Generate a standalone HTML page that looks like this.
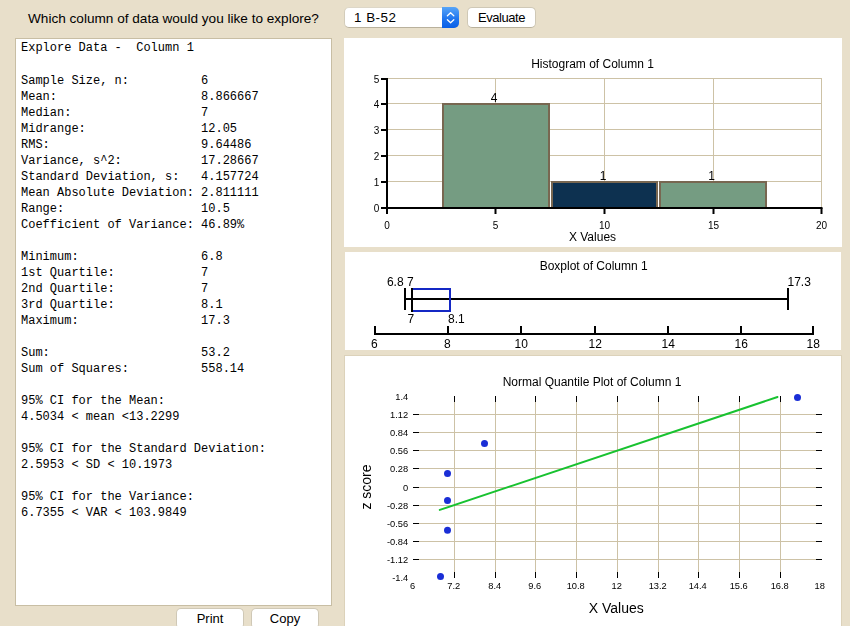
<!DOCTYPE html>
<html lang="en">
<head>
<meta charset="utf-8">
<title>Explore Data</title>
<style>
html,body{margin:0;padding:0;}
body{width:850px;height:626px;overflow:hidden;background:#e8dfca;position:relative;font-family:'Liberation Sans', Arial, Helvetica, sans-serif;color:#000;}
.abs{position:absolute;}
#q{left:28px;top:11px;font-size:13.6px;line-height:16px;white-space:nowrap;}
#sel{left:344px;top:7px;width:115px;height:21px;background:#fff;border-radius:5px;box-sizing:border-box;border:1px solid #d3ccba;border-top-color:#ddd7c8;border-bottom-color:#b9b19c;font-size:13.4px;line-height:19px;}
#sel span{position:absolute;left:9px;top:0;letter-spacing:0.5px;}
#sel i{position:absolute;right:-1px;top:-1px;width:17px;height:21px;background:linear-gradient(#57a5f8,#1b72ee 60%,#0a5fe6);display:block;border-radius:0 5px 5px 0;}
.btn{height:21px;background:#fff;border-radius:5px;box-sizing:border-box;border:1px solid #cfc8b6;border-bottom-color:#b9b19c;font-size:13px;line-height:19px;text-align:center;}
#panel{left:15px;top:38px;width:317px;height:568px;box-sizing:border-box;background:#fff;border:1px solid #c8bea4;}
#panel pre{margin:0;position:absolute;left:5px;font-family:'Liberation Mono', 'DejaVu Sans Mono', monospace;font-size:12px;line-height:16px;}
#p1{top:1px;}
#p2{top:34px;}
svg{position:absolute;left:0;top:0;}
#charts{will-change:transform;}
svg text{font-family:'Liberation Sans', Arial, Helvetica, sans-serif;fill:#000;}
</style>
</head>
<body>
<div id="q" class="abs">Which column of data would you like to explore?</div>
<div id="sel" class="abs"><span>1 B-52</span><i><svg width="17" height="21" viewBox="0 0 17 21"><path d="M5.4 8.7 L8.6 5.7 L11.8 8.7 M5.4 12.7 L8.6 15.7 L11.8 12.7" fill="none" stroke="#fff" stroke-width="1.3" stroke-linecap="round" stroke-linejoin="round"/></svg></i></div>
<div class="abs btn" style="left:467px;top:7px;width:69px;letter-spacing:-0.45px;">Evaluate</div>
<div id="panel" class="abs"><pre id="p1">Explore Data -  Column 1</pre><pre id="p2">Sample Size, n:          6
Mean:                    8.866667
Median:                  7
Midrange:                12.05
RMS:                     9.64486
Variance, s^2:           17.28667
Standard Deviation, s:   4.157724
Mean Absolute Deviation: 2.811111
Range:                   10.5
Coefficient of Variance: 46.89%

Minimum:                 6.8
1st Quartile:            7
2nd Quartile:            7
3rd Quartile:            8.1
Maximum:                 17.3

Sum:                     53.2
Sum of Squares:          558.14

95% CI for the Mean:
4.5034 &lt; mean &lt;13.2299

95% CI for the Standard Deviation:
2.5953 &lt; SD &lt; 10.1973

95% CI for the Variance:
6.7355 &lt; VAR &lt; 103.9849</pre></div>
<div class="abs btn" style="left:176px;top:608px;width:68px;">Print</div>
<div class="abs btn" style="left:251px;top:608px;width:68px;">Copy</div>
<svg id="charts" width="850" height="626" viewBox="0 0 850 626">
<rect x="344" y="38" width="498" height="209" fill="#fff"/>
<rect x="345" y="252" width="496" height="98" fill="#fff"/>
<rect x="344.5" y="355.5" width="497" height="280" fill="#fff" stroke="#dcd2ba" stroke-width="1"/>
<text x="592.5" y="68.2" font-size="12" text-anchor="middle">Histogram of Column 1</text>
<line x1="388" x2="822" y1="181.5" y2="181.5" stroke="#cdc2a6" stroke-width="1"/>
<line x1="388" x2="822" y1="155.5" y2="155.5" stroke="#cdc2a6" stroke-width="1"/>
<line x1="388" x2="822" y1="129.5" y2="129.5" stroke="#cdc2a6" stroke-width="1"/>
<line x1="388" x2="822" y1="103.5" y2="103.5" stroke="#cdc2a6" stroke-width="1"/>
<line x1="388" x2="822" y1="78.5" y2="78.5" stroke="#cdc2a6" stroke-width="1"/>
<line x1="495.5" x2="495.5" y1="78" y2="207" stroke="#cdc2a6" stroke-width="1"/>
<line x1="604.5" x2="604.5" y1="78" y2="207" stroke="#cdc2a6" stroke-width="1"/>
<line x1="713.5" x2="713.5" y1="78" y2="207" stroke="#cdc2a6" stroke-width="1"/>
<line x1="821.5" x2="821.5" y1="78" y2="207" stroke="#cdc2a6" stroke-width="1"/>
<rect x="443" y="104" width="106" height="104" fill="#759c82" stroke="#786751" stroke-width="2"/>
<text x="494" y="101.8" font-size="12" text-anchor="middle">4</text>
<rect x="552" y="182" width="105" height="26" fill="#0d3150" stroke="#786751" stroke-width="2"/>
<text x="603" y="179.8" font-size="12" text-anchor="middle">1</text>
<rect x="660" y="182" width="106" height="26" fill="#759c82" stroke="#786751" stroke-width="2"/>
<text x="711.5" y="179.8" font-size="12" text-anchor="middle">1</text>
<line x1="387" x2="387" y1="78" y2="214" stroke="#000" stroke-width="2"/>
<line x1="381" x2="822.5" y1="208" y2="208" stroke="#000" stroke-width="2"/>
<line x1="381" x2="387" y1="208.0" y2="208.0" stroke="#000" stroke-width="2"/>
<text x="379.3" y="211.9" font-size="10" text-anchor="end">0</text>
<line x1="381" x2="387" y1="182.0" y2="182.0" stroke="#000" stroke-width="2"/>
<text x="379.3" y="185.9" font-size="10" text-anchor="end">1</text>
<line x1="381" x2="387" y1="156.0" y2="156.0" stroke="#000" stroke-width="2"/>
<text x="379.3" y="159.9" font-size="10" text-anchor="end">2</text>
<line x1="381" x2="387" y1="130.0" y2="130.0" stroke="#000" stroke-width="2"/>
<text x="379.3" y="133.9" font-size="10" text-anchor="end">3</text>
<line x1="381" x2="387" y1="104.0" y2="104.0" stroke="#000" stroke-width="2"/>
<text x="379.3" y="107.9" font-size="10" text-anchor="end">4</text>
<line x1="381" x2="387" y1="79.0" y2="79.0" stroke="#000" stroke-width="2"/>
<text x="379.3" y="82.9" font-size="10" text-anchor="end">5</text>
<line x1="387" x2="387" y1="208" y2="214" stroke="#000" stroke-width="2"/>
<text x="387" y="229" font-size="10" text-anchor="middle">0</text>
<line x1="495.5" x2="495.5" y1="208" y2="214" stroke="#000" stroke-width="2"/>
<text x="495.5" y="229" font-size="10" text-anchor="middle">5</text>
<line x1="604.5" x2="604.5" y1="208" y2="214" stroke="#000" stroke-width="2"/>
<text x="604.5" y="229" font-size="10" text-anchor="middle">10</text>
<line x1="713.5" x2="713.5" y1="208" y2="214" stroke="#000" stroke-width="2"/>
<text x="713.5" y="229" font-size="10" text-anchor="middle">15</text>
<line x1="821.5" x2="821.5" y1="208" y2="214" stroke="#000" stroke-width="2"/>
<text x="821.5" y="229" font-size="10" text-anchor="middle">20</text>
<text x="592.5" y="240.6" font-size="12" text-anchor="middle">X Values</text>
<text x="593.7" y="270.3" font-size="12" text-anchor="middle">Boxplot of Column 1</text>
<line x1="405" x2="788" y1="299" y2="299" stroke="#000" stroke-width="2"/>
<line x1="405" x2="405" y1="288" y2="310" stroke="#000" stroke-width="2"/>
<line x1="788" x2="788" y1="288" y2="310" stroke="#000" stroke-width="2"/>
<rect x="412" y="289" width="38" height="22" fill="none" stroke="#1428c4" stroke-width="2"/>
<line x1="412" x2="412" y1="288" y2="312" stroke="#000" stroke-width="2"/>
<text x="403.6" y="285.8" font-size="12" text-anchor="end">6.8</text>
<text x="407" y="285.8" font-size="12">7</text>
<text x="787.5" y="285.8" font-size="12">17.3</text>
<text x="407.5" y="322.6" font-size="12">7</text>
<text x="448" y="322.6" font-size="12">8.1</text>
<line x1="374" x2="814" y1="334" y2="334" stroke="#000" stroke-width="2"/>
<line x1="375.0" x2="375.0" y1="326" y2="334" stroke="#000" stroke-width="2"/>
<text x="374.3" y="347.6" font-size="12" text-anchor="middle">6</text>
<line x1="448.0" x2="448.0" y1="326" y2="334" stroke="#000" stroke-width="2"/>
<text x="447.3" y="347.6" font-size="12" text-anchor="middle">8</text>
<line x1="521.0" x2="521.0" y1="326" y2="334" stroke="#000" stroke-width="2"/>
<text x="521.2" y="347.6" font-size="12" text-anchor="middle">10</text>
<line x1="595.0" x2="595.0" y1="326" y2="334" stroke="#000" stroke-width="2"/>
<text x="595.2" y="347.6" font-size="12" text-anchor="middle">12</text>
<line x1="668.0" x2="668.0" y1="326" y2="334" stroke="#000" stroke-width="2"/>
<text x="668.2" y="347.6" font-size="12" text-anchor="middle">14</text>
<line x1="741.0" x2="741.0" y1="326" y2="334" stroke="#000" stroke-width="2"/>
<text x="741.2" y="347.6" font-size="12" text-anchor="middle">16</text>
<line x1="813.0" x2="813.0" y1="326" y2="334" stroke="#000" stroke-width="2"/>
<text x="813.2" y="347.6" font-size="12" text-anchor="middle">18</text>
<text x="592" y="385.9" font-size="12" text-anchor="middle">Normal Quantile Plot of Column 1</text>
<line x1="419" x2="816" y1="414.5" y2="414.5" stroke="#cdc2a6" stroke-width="1"/>
<line x1="419" x2="816" y1="432.5" y2="432.5" stroke="#cdc2a6" stroke-width="1"/>
<line x1="419" x2="816" y1="450.5" y2="450.5" stroke="#cdc2a6" stroke-width="1"/>
<line x1="419" x2="816" y1="468.5" y2="468.5" stroke="#cdc2a6" stroke-width="1"/>
<line x1="419" x2="816" y1="487.5" y2="487.5" stroke="#cdc2a6" stroke-width="1"/>
<line x1="419" x2="816" y1="505.5" y2="505.5" stroke="#cdc2a6" stroke-width="1"/>
<line x1="419" x2="816" y1="523.5" y2="523.5" stroke="#cdc2a6" stroke-width="1"/>
<line x1="419" x2="816" y1="541.5" y2="541.5" stroke="#cdc2a6" stroke-width="1"/>
<line x1="419" x2="816" y1="559.5" y2="559.5" stroke="#cdc2a6" stroke-width="1"/>
<line x1="454.5" x2="454.5" y1="402" y2="572" stroke="#cdc2a6" stroke-width="1"/>
<line x1="495.5" x2="495.5" y1="402" y2="572" stroke="#cdc2a6" stroke-width="1"/>
<line x1="535.5" x2="535.5" y1="402" y2="572" stroke="#cdc2a6" stroke-width="1"/>
<line x1="576.5" x2="576.5" y1="402" y2="572" stroke="#cdc2a6" stroke-width="1"/>
<line x1="617.5" x2="617.5" y1="402" y2="572" stroke="#cdc2a6" stroke-width="1"/>
<line x1="658.5" x2="658.5" y1="402" y2="572" stroke="#cdc2a6" stroke-width="1"/>
<line x1="698.5" x2="698.5" y1="402" y2="572" stroke="#cdc2a6" stroke-width="1"/>
<line x1="739.5" x2="739.5" y1="402" y2="572" stroke="#cdc2a6" stroke-width="1"/>
<line x1="780.5" x2="780.5" y1="402" y2="572" stroke="#cdc2a6" stroke-width="1"/>
<text x="408.2" y="399.6" font-size="9.3" text-anchor="end">1.4</text>
<line x1="413" x2="419" y1="414.5" y2="414.5" stroke="#000" stroke-width="1"/>
<line x1="816" x2="822" y1="414.5" y2="414.5" stroke="#000" stroke-width="1"/>
<text x="408.2" y="417.6" font-size="9.3" text-anchor="end">1.12</text>
<line x1="413" x2="419" y1="432.5" y2="432.5" stroke="#000" stroke-width="1"/>
<line x1="816" x2="822" y1="432.5" y2="432.5" stroke="#000" stroke-width="1"/>
<text x="408.2" y="435.6" font-size="9.3" text-anchor="end">0.84</text>
<line x1="413" x2="419" y1="450.5" y2="450.5" stroke="#000" stroke-width="1"/>
<line x1="816" x2="822" y1="450.5" y2="450.5" stroke="#000" stroke-width="1"/>
<text x="408.2" y="453.6" font-size="9.3" text-anchor="end">0.56</text>
<line x1="413" x2="419" y1="468.5" y2="468.5" stroke="#000" stroke-width="1"/>
<line x1="816" x2="822" y1="468.5" y2="468.5" stroke="#000" stroke-width="1"/>
<text x="408.2" y="471.6" font-size="9.3" text-anchor="end">0.28</text>
<line x1="413" x2="419" y1="487.5" y2="487.5" stroke="#000" stroke-width="1"/>
<line x1="816" x2="822" y1="487.5" y2="487.5" stroke="#000" stroke-width="1"/>
<text x="408.2" y="490.6" font-size="9.3" text-anchor="end">0</text>
<line x1="413" x2="419" y1="505.5" y2="505.5" stroke="#000" stroke-width="1"/>
<line x1="816" x2="822" y1="505.5" y2="505.5" stroke="#000" stroke-width="1"/>
<text x="408.2" y="508.6" font-size="9.3" text-anchor="end">-0.28</text>
<line x1="413" x2="419" y1="523.5" y2="523.5" stroke="#000" stroke-width="1"/>
<line x1="816" x2="822" y1="523.5" y2="523.5" stroke="#000" stroke-width="1"/>
<text x="408.2" y="526.6" font-size="9.3" text-anchor="end">-0.56</text>
<line x1="413" x2="419" y1="541.5" y2="541.5" stroke="#000" stroke-width="1"/>
<line x1="816" x2="822" y1="541.5" y2="541.5" stroke="#000" stroke-width="1"/>
<text x="408.2" y="544.6" font-size="9.3" text-anchor="end">-0.84</text>
<line x1="413" x2="419" y1="559.5" y2="559.5" stroke="#000" stroke-width="1"/>
<line x1="816" x2="822" y1="559.5" y2="559.5" stroke="#000" stroke-width="1"/>
<text x="408.2" y="562.6" font-size="9.3" text-anchor="end">-1.12</text>
<text x="408.2" y="580.6" font-size="9.3" text-anchor="end">-1.4</text>
<text x="412.7" y="589" font-size="9.3" text-anchor="middle">6</text>
<line x1="454.5" x2="454.5" y1="396" y2="402" stroke="#000" stroke-width="1"/>
<line x1="454.5" x2="454.5" y1="572" y2="578" stroke="#000" stroke-width="1"/>
<text x="453.7" y="589" font-size="9.3" text-anchor="middle">7.2</text>
<line x1="495.5" x2="495.5" y1="396" y2="402" stroke="#000" stroke-width="1"/>
<line x1="495.5" x2="495.5" y1="572" y2="578" stroke="#000" stroke-width="1"/>
<text x="494.7" y="589" font-size="9.3" text-anchor="middle">8.4</text>
<line x1="535.5" x2="535.5" y1="396" y2="402" stroke="#000" stroke-width="1"/>
<line x1="535.5" x2="535.5" y1="572" y2="578" stroke="#000" stroke-width="1"/>
<text x="534.7" y="589" font-size="9.3" text-anchor="middle">9.6</text>
<line x1="576.5" x2="576.5" y1="396" y2="402" stroke="#000" stroke-width="1"/>
<line x1="576.5" x2="576.5" y1="572" y2="578" stroke="#000" stroke-width="1"/>
<text x="575.7" y="589" font-size="9.3" text-anchor="middle">10.8</text>
<line x1="617.5" x2="617.5" y1="396" y2="402" stroke="#000" stroke-width="1"/>
<line x1="617.5" x2="617.5" y1="572" y2="578" stroke="#000" stroke-width="1"/>
<text x="616.7" y="589" font-size="9.3" text-anchor="middle">12</text>
<line x1="658.5" x2="658.5" y1="396" y2="402" stroke="#000" stroke-width="1"/>
<line x1="658.5" x2="658.5" y1="572" y2="578" stroke="#000" stroke-width="1"/>
<text x="657.7" y="589" font-size="9.3" text-anchor="middle">13.2</text>
<line x1="698.5" x2="698.5" y1="396" y2="402" stroke="#000" stroke-width="1"/>
<line x1="698.5" x2="698.5" y1="572" y2="578" stroke="#000" stroke-width="1"/>
<text x="697.7" y="589" font-size="9.3" text-anchor="middle">14.4</text>
<line x1="739.5" x2="739.5" y1="396" y2="402" stroke="#000" stroke-width="1"/>
<line x1="739.5" x2="739.5" y1="572" y2="578" stroke="#000" stroke-width="1"/>
<text x="738.7" y="589" font-size="9.3" text-anchor="middle">15.6</text>
<line x1="780.5" x2="780.5" y1="396" y2="402" stroke="#000" stroke-width="1"/>
<line x1="780.5" x2="780.5" y1="572" y2="578" stroke="#000" stroke-width="1"/>
<text x="779.7" y="589" font-size="9.3" text-anchor="middle">16.8</text>
<text x="819.7" y="589" font-size="9.3" text-anchor="middle">18</text>
<line x1="439.8" y1="509.9" x2="777.5" y2="397" stroke="#18c230" stroke-width="2" stroke-linecap="round"/>
<circle cx="440.5" cy="576.4" r="3.5" fill="#1a2ed6"/>
<circle cx="447.5" cy="530.3" r="3.5" fill="#1a2ed6"/>
<circle cx="447.5" cy="500.4" r="3.5" fill="#1a2ed6"/>
<circle cx="447.5" cy="473.4" r="3.5" fill="#1a2ed6"/>
<circle cx="484.5" cy="443.5" r="3.5" fill="#1a2ed6"/>
<circle cx="797.5" cy="397.5" r="3.5" fill="#1a2ed6"/>
<text transform="translate(370.5,487) rotate(-90)" font-size="14" text-anchor="middle">z score</text>
<text x="616.3" y="613" font-size="14" text-anchor="middle">X Values</text>
</svg>
</body>
</html>
